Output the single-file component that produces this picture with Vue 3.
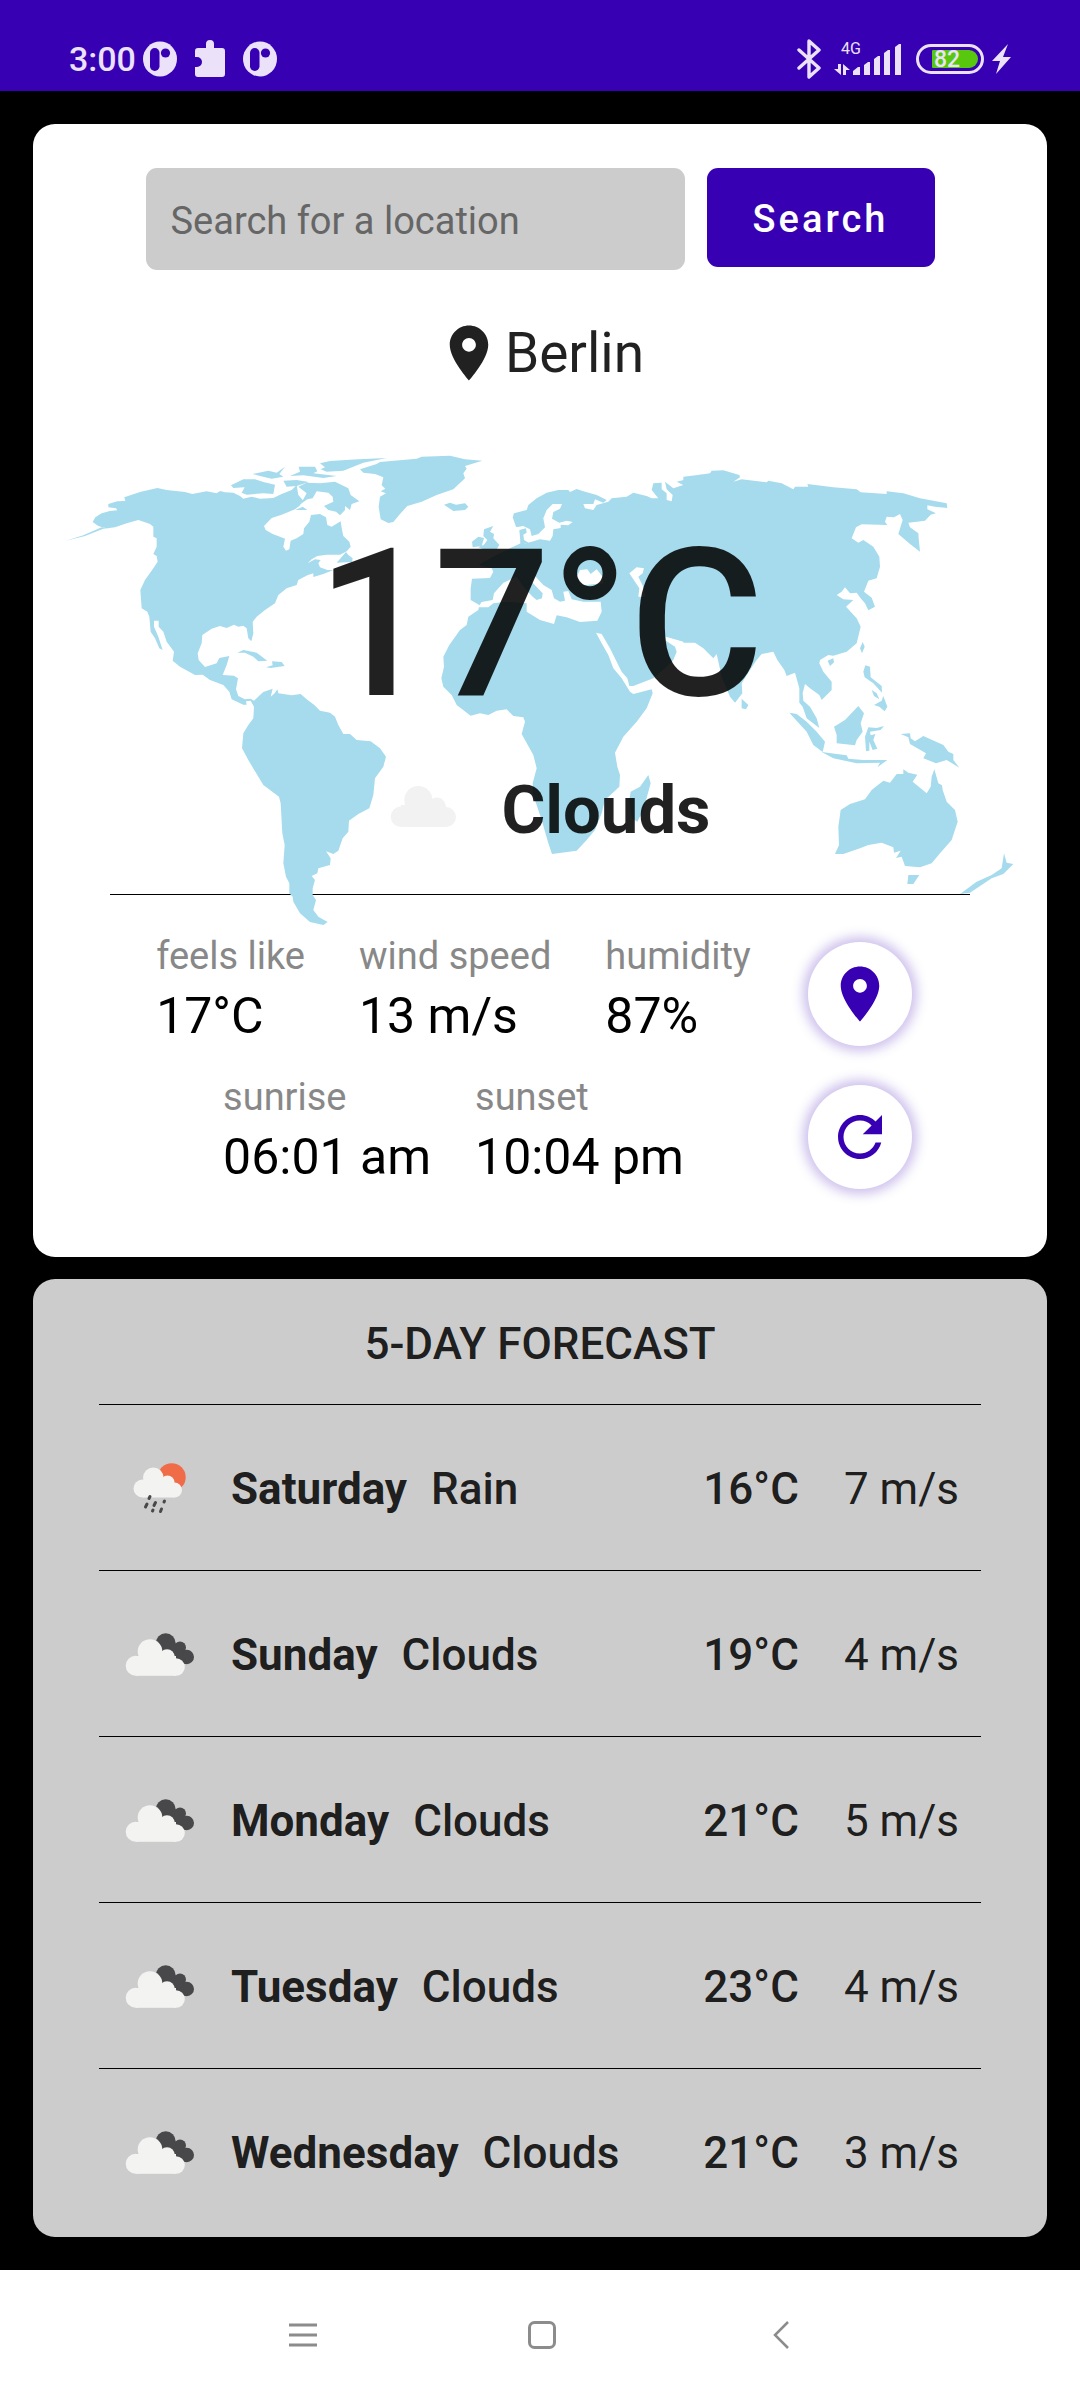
<script setup>
	import { ref } from 'vue'

	const query = ref('');

	const current = {
		city: 'Berlin',
		temp: 17,
		condition: 'Clouds'
	};

	const statRows = [
		[
			{label: 'feels like', value: '17°C'},
			{label: 'wind speed', value: '13 m/s'},
			{label: 'humidity', value: '87%'}
		],
		[
			{label: 'sunrise', value: '06:01 am'},
			{label: 'sunset', value: '10:04 pm'}
		]
	];

	const forecast = [
		{day: 'Saturday', condition: 'Rain', temp: 16, wind: 7},
		{day: 'Sunday', condition: 'Clouds', temp: 19, wind: 4},
		{day: 'Monday', condition: 'Clouds', temp: 21, wind: 5},
		{day: 'Tuesday', condition: 'Clouds', temp: 23, wind: 4},
		{day: 'Wednesday', condition: 'Clouds', temp: 21, wind: 3}
	];
</script>

<template>
	<div class="screen">
		<header class="statusbar">
			<div class="status-left">
				<span class="time">3:00</span>
				<svg width="34" height="36" viewBox="0 0 34 36">
					<ellipse cx="17" cy="18" rx="17" ry="17.500" fill="#ebe2fa" />
					<rect x="7" y="7" width="9.500" height="23" rx="4.700" fill="#3700b3" />
					<circle cx="22.500" cy="12" r="4.600" fill="#3700b3" />
				</svg>
				<svg width="30" height="38" viewBox="0 0 30 38">
					<path fill="#ebe2fa" d="M3 8h8V4a4 4 0 0 1 8 0v4h8a3 3 0 0 1 3 3v23a3 3 0 0 1-3 3H3a3 3 0 0 1-3-3v-7h2a5 5 0 0 0 0-10H0v-6a3 3 0 0 1 3-3z" />
				</svg>
				<svg width="34" height="36" viewBox="0 0 34 36">
					<ellipse cx="17" cy="18" rx="17" ry="17.500" fill="#ebe2fa" />
					<rect x="7" y="7" width="9.500" height="23" rx="4.700" fill="#3700b3" />
					<circle cx="22.500" cy="12" r="4.600" fill="#3700b3" />
				</svg>
			</div>
			<div class="status-right">
				<svg class="bluetooth" width="25" height="40" viewBox="0 0 25 40">
					<path d="M2 11l20 18-10 9V2l10 9L2 29" fill="none" stroke="#ebe2fa" stroke-width="3.400" stroke-linejoin="round" stroke-linecap="round" />
				</svg>
				<svg width="68" height="42" viewBox="0 -4 68 42" fill="#ebe2fa">
					<text x="7" y="12" font-family="Roboto, sans-serif" font-size="16">4G</text>
					<path d="M4 22h3v11L0 27h4zM9 33V22l7 6h-4v5z" />
					<path d="M19 33v-4l5-4h2v8zM30 33V23l4-3h2v13zM40 33V17l4-3h2v19zM50 33V11l4-3h2v25zM61 33V5l4-3h2v31z" />
				</svg>
				<div class="battery"><span>82</span></div>
				<svg class="bolt" width="19" height="30" viewBox="0 0 19 30">
					<path d="M16 0L0 17h8L4 30l15-17h-8z" fill="#ebe2fa" />
				</svg>
			</div>
		</header>

		<main>
			<section class="card current">
				<form class="search" @submit.prevent>
					<input v-model="query" type="text" placeholder="Search for a location" aria-label="Search for a location">
					<button type="submit">Search</button>
				</form>

				<div class="location">
					<svg width="66" height="66" viewBox="0 0 24 24">
						<path fill="#212121" d="M12 2C8.130 2 5 5.130 5 9c0 5.250 7 13 7 13s7-7.750 7-13c0-3.870-3.130-7-7-7zm0 9.500c-1.380 0-2.500-1.120-2.500-2.500s1.120-2.500 2.500-2.500 2.500 1.120 2.500 2.500-1.120 2.500-2.500 2.500z" />
					</svg>
					<h1>{{current.city}}</h1>
				</div>

				<div class="hero">
					<svg class="map" viewBox="108 75 2844 1416" fill="#a5dbed">
						<!-- the Americas -->
						<path d="M108 332L160 316 215 292 240 298 205 288 188 276 196 262 215 250 240 243 262 241 258 235 235 232 235 222 262 214 286 213 283 202 330 186 382 174 410 180 465 186 487 192 530 184 560 190 570 183 585 187 610 188 630 198 640 206 665 200 690 206 730 204 755 192 785 180 800 165 805 195 820 212 808 228 795 238 755 254 725 264 702 288 707 300 728 312 750 320 765 326 760 350 768 362 778 358 782 332 800 325 820 312 822 295 838 275 843 255 870 252 888 262 892 285 905 290 932 274 936 300 940 318 958 335 962 350 950 364 930 374 890 374 862 378 845 388 833 400 855 388 872 390 865 400 870 412 892 420 910 420 880 432 850 441 850 430 832 436 805 450 800 465 770 475 745 495 735 520 705 540 680 560 668 576 670 610 664 634 655 625 650 595 640 587 625 590 612 584 590 594 570 588 545 596 517 615 515 640 503 670 506 690 525 711 560 700 568 684 598 678 590 705 578 735 612 737 624 745 618 778 625 798 645 808 662 806 672 812 690 795 700 786 728 776 722 800 734 790 742 778 745 790 785 796 812 792 830 808 852 824 870 842 900 848 915 860 925 885 940 912 960 912 980 930 1022 934 1050 955 1068 980 1060 1010 1035 1045 1030 1095 1018 1135 985 1152 957 1172 955 1205 938 1225 925 1262 910 1272 888 1264 902 1285 900 1305 865 1315 862 1330 845 1338 855 1350 848 1375 848 1395 858 1410 850 1440 865 1460 893 1476 880 1485 840 1476 810 1450 790 1415 788 1400 778 1390 778 1360 768 1340 760 1300 764 1245 757 1210 752 1120 747 1100 700 1065 680 1032 655 990 636 955 640 910 655 885 670 865 672 830 662 812 648 814 650 824 640 824 605 808 598 785 580 765 540 750 518 734 495 735 450 710 428 692 432 665 410 635 400 605 386 590 386 572 372 572 372 590 385 620 398 660 388 655 375 625 362 605 358 560 352 545 335 535 331 480 345 450 370 415 383 395 380 378 370 372 380 350 380 325 370 320 370 290 360 282 325 270 290 280 255 292 220 296 165 318z" />
						<path d="M920 398L948 366 955 375 968 385 966 396zM622 668L640 660 680 668 712 692 685 694 670 680 645 668zM708 712L728 706 726 694 755 696 764 708 722 714z" />
						<path d="M603 166L640 148 675 148 700 156 735 164 730 192 700 190 650 194 635 188 644 172 610 174zM668 132L715 122 740 128 765 110 748 132 760 140 725 146 690 138zM760 152L800 150 836 156 800 168 770 170zM780 138L810 125 806 110 855 110 862 124 850 130 920 138 880 144 820 136zM870 100L900 93 985 88 1070 84 1000 98 940 122 890 125 872 118 885 112zM805 170L830 158 870 160 915 155 955 175 962 195 988 214 965 222 960 240 945 228 945 240 930 256 918 245 895 240 882 228 910 215 908 200 895 188 860 184 848 205 832 208 812 222 830 190zM796 240L818 230 832 240z" />

						<!-- Greenland, Iceland, Europe and Africa -->
						<g transform="translate(960 0)">
							<path d="M30 118L80 102 90 96 200 86 215 80 300 77 345 88 397 92 345 108 350 116 340 130 345 145 310 178 260 195 215 215 172 228 150 252 130 276 115 279 92 268 86 230 90 200 108 190 92 184 106 176 95 166 100 142 75 132 40 128z" />
							<path d="M282 224L300 218 318 224 345 220 355 230 345 240 310 243 300 236zM385 352L402 344 412 330 400 318 402 298 430 288 420 305 432 312 430 325 448 345 440 358 400 358zM366 335L385 320 402 324 395 348 368 352z" />
							<path d="M488 262L492 250 530 240 535 225 560 205 590 188 625 180 655 180 660 186 680 177 700 184 740 195 770 210 760 218 735 208 730 222 700 222 705 235 730 240 740 225 775 215 785 205 830 200 850 188 890 198 905 205 925 205 905 180 910 160 935 158 935 178 950 190 950 210 965 214 968 195 950 178 945 155 970 175 1000 165 980 155 1010 148 1050 134 1100 134 1100 640 1000 635 948 620 948 632 975 650 980 665 970 690 945 715 910 745 850 768 838 768 832 745 815 725 800 695 780 655 755 612 738 608 755 640 775 675 790 715 815 745 840 785 850 792 905 778 908 790 890 835 860 875 820 920 795 968 802 1010 810 1035 808 1070 765 1110 755 1150 735 1200 710 1230 680 1262 606 1272 595 1240 575 1170 548 1090 548 1060 560 1015 550 975 515 912 525 875 520 862 490 858 470 838 440 842 415 855 390 850 362 857 320 825 305 795 280 770 274 745 282 710 280 680 298 645 330 600 350 585 355 560 385 540 388 525 362 510 362 475 366 446 420 444 430 425 425 415 385 405 400 396 440 375 480 355 512 340 508 300 498 290z" />
							<path d="M895 1035L902 1060 880 1140 862 1175 845 1165 838 1110 842 1085 870 1070z" />
							<!-- inland seas -->
							<g fill="#fff">
								<path d="M384 532L395 516 428 510 432 490 460 458 500 440 520 470 548 500 560 510 576 505 578 490 545 455 555 438 580 465 605 480 612 505 630 515 645 512 640 485 655 483 665 508 700 515 752 515 755 545 742 572 690 576 650 562 620 556 612 582 570 570 530 545 530 520 470 515 430 520 415 532z" />
								<path d="M680 440L690 420 712 418 722 432 740 418 758 440 760 460 700 466zM838 430L860 412 882 415 878 430 865 440 880 470 885 500 865 500 868 475z" />
								<path d="M498 292L520 288 540 298 545 318 565 312 585 292 580 265 590 240 608 222 636 222 630 236 610 246 606 266 628 278 650 272 668 276 655 286 632 284 632 294 610 298 608 318 600 332 570 328 545 335 520 342 510 330z" />
							</g>
							<path d="M508 300L528 295 530 308 520 314 522 330 536 338 512 344z" />
						</g>

						<!-- Asia and Oceania -->
						<g transform="translate(1980 0)">
							<path d="M-20 140L30 134 60 130 65 122 100 121 148 135 150 142 130 155 155 148 230 157 235 152 275 160 310 178 315 170 355 170 352 162 430 172 500 178 512 187 590 192 590 184 640 190 690 205 770 220 772 234 735 230 712 226 712 238 738 250 722 254 705 272 655 278 660 292 685 310 686 325 690 365 660 342 625 312 638 270 630 252 612 262 590 260 585 275 592 285 515 283 498 292 485 325 505 338 520 330 550 350 568 380 570 410 560 445 535 452 530 465 522 485 545 503 555 530 535 541 525 520 512 505 500 488 480 490 465 472 455 485 440 495 460 508 490 510 468 530 500 565 512 590 500 640 470 665 430 677 415 675 390 690 388 700 400 725 425 755 425 780 395 810 388 795 360 775 345 762 338 790 340 812 360 830 380 865 388 894 350 865 338 830 328 818 328 775 315 728 290 738 283 720 262 690 250 665 215 672 200 690 180 720 155 760 157 790 135 818 120 800 95 740 80 672 70 685 40 655 15 638 -20 638z" />
							<path d="M155 806L175 825 168 838 155 835zM510 655L518 636 524 650 516 670zM413 692L430 685 432 697 420 708zM526 706L540 710 542 742 575 768 576 788 550 760 524 742 520 725zM545 780L560 790 568 808 552 798zM552 825L575 812 580 798 592 830 584 844 568 830z" />
							<path d="M298 848L320 852 350 875 380 905 405 935 398 966 370 945 350 905zM395 966L440 972 470 976 475 986 520 990 592 990 562 1012 570 998 500 1000 430 985zM432 890L465 870 505 828 522 850 512 880 518 905 500 930 495 946 440 940 440 915zM528 964L525 920 535 892 560 894 582 888 572 900 540 905 542 916 556 912 550 930 562 956 548 960 538 935 538 962zM632 912L660 910 662 925 675 934 700 918 760 945 775 965 790 972 790 990 808 1013 770 990 738 1000 700 985 708 970 660 942 655 922z" />
							<path d="M640 1018L655 1028 682 1034 668 1055 710 1090 722 1070 725 1040 733 1018 745 1060 756 1066 758 1080 770 1115 795 1140 803 1175 785 1230 750 1270 725 1300 690 1312 645 1308 635 1280 618 1284 632 1262 612 1268 610 1252 575 1238 535 1245 510 1255 460 1272 435 1272 447 1245 445 1190 452 1140 480 1122 525 1108 545 1080 580 1052 600 1058 620 1032 640 1032zM655 1335L688 1335 670 1362 652 1362zM942 1270L950 1298 970 1302 940 1332 905 1345 840 1388 810 1392 860 1355 905 1335 935 1315z" />
						</g>
					</svg>

					<p class="temp">{{current.temp}}°C</p>
					<div class="condition">
						<svg width="110" height="110" viewBox="0 0 110 110" fill="#f2f2f2">
							<circle cx="32" cy="61.700" r="10.300" />
							<circle cx="49.300" cy="45" r="14" />
							<circle cx="68" cy="51" r="8.500" />
							<circle cx="77" cy="62" r="10" />
							<rect x="32" y="50" width="45" height="22" />
						</svg>
						<strong>{{current.condition}}</strong>
					</div>
				</div>

				<div class="details">
					<div class="stats">
						<dl v-for="row in statRows">
							<div v-for="stat in row">
								<dt>{{stat.label}}</dt>
								<dd>{{stat.value}}</dd>
							</div>
						</dl>
					</div>
					<div class="actions">
						<button aria-label="Use my location">
							<svg width="66" height="66" viewBox="0 0 24 24">
								<path fill="#3700b3" d="M12 2C8.130 2 5 5.130 5 9c0 5.250 7 13 7 13s7-7.750 7-13c0-3.870-3.130-7-7-7zm0 9.500c-1.380 0-2.500-1.120-2.500-2.500s1.120-2.500 2.500-2.500 2.500 1.120 2.500 2.500-1.120 2.500-2.500 2.500z" />
							</svg>
						</button>
						<button aria-label="Refresh">
							<svg width="66" height="66" viewBox="0 0 24 24">
								<path fill="#3700b3" d="M17.650 6.350C16.200 4.900 14.210 4 12 4c-4.420 0-7.990 3.580-7.990 8s3.570 8 7.990 8c3.730 0 6.840-2.550 7.730-6h-2.080c-.820 2.330-3.040 4-5.650 4-3.310 0-6-2.690-6-6s2.690-6 6-6c1.660 0 3.140.690 4.220 1.780L13 11h7V4l-2.350 2.350z" />
							</svg>
						</button>
					</div>
				</div>
			</section>

			<section class="card forecast">
				<h2>5-DAY FORECAST</h2>
				<ul>
					<li v-for="item in forecast">
						<svg v-if="item.condition === 'Rain'" width="110" height="110" viewBox="0 0 110 110">
							<circle cx="66.700" cy="44.200" r="14" fill="#f06c48" />
							<g fill="#f3f3f2">
								<circle cx="37.500" cy="55.500" r="9" />
								<circle cx="48.300" cy="44.800" r="10.300" />
								<circle cx="62.500" cy="49.500" r="7" />
								<circle cx="69.500" cy="57" r="7.500" />
								<rect x="37.500" y="50" width="32" height="14.500" />
							</g>
							<path d="M45 63.500l-1 2M42 71l-1.500 3M50.500 69.500l-1.500 3M59.500 68l-.500 1M48 77l-.500 1M56.500 76l-1 2.500" stroke="#48484a" stroke-width="3" stroke-linecap="round" />
						</svg>
						<svg v-else width="110" height="110" viewBox="0 0 110 110">
							<g fill="#48484a">
								<circle cx="60.700" cy="44.200" r="10" />
								<circle cx="75" cy="48.500" r="6" />
								<circle cx="81.800" cy="58" r="7.200" />
								<path d="M60 45h15l7 20H66z" />
							</g>
							<g fill="#f3f3f2">
								<circle cx="30.700" cy="66.800" r="10" />
								<circle cx="45" cy="52.500" r="12.300" />
								<circle cx="62" cy="58" r="7.800" />
								<circle cx="71" cy="68" r="8.800" />
								<rect x="30.700" y="57" width="40.300" height="19.800" />
							</g>
						</svg>
						<strong>{{item.day}}</strong>
						<span class="what">{{item.condition}}</span>
						<span class="degrees">{{item.temp}}°C</span>
						<span>{{item.wind}} m/s</span>
					</li>
				</ul>
			</section>
		</main>

		<nav class="navbar">
			<button aria-label="Recent apps">
				<svg width="28" height="28" viewBox="0 0 28 28" stroke="#8c8c8c" stroke-width="3">
					<path d="M0 4h28M0 14h28M0 24h28" />
				</svg>
			</button>
			<button aria-label="Home">
				<svg width="28" height="28" viewBox="0 0 28 28" stroke="#8c8c8c" stroke-width="3" fill="none">
					<rect x="1.500" y="1.500" width="25" height="25" rx="5" />
				</svg>
			</button>
			<button aria-label="Back">
				<svg width="28" height="28" viewBox="0 0 28 28" stroke="#8c8c8c" stroke-width="2.500" fill="none">
					<path d="M21 1L8 14l13 13" />
				</svg>
			</button>
		</nav>
	</div>
</template>

<style>
	body {
		margin: 0;
		background: #000;
	}
</style>

<style scoped>
	.screen {
		font-family: Roboto, "Noto Sans", sans-serif;
		color: rgba(0,0,0,.87);
		background: #000;
	}
	svg {
		display: block;
		flex: none;
	}
	button {
		padding: 0;
		border: none;
		font-family: inherit;
		cursor: pointer;
	}
	h1, h2, p, dl, dd, ul {
		margin: 0;
		padding: 0;
	}

	.statusbar {
		display: flex;
		justify-content: space-between;
		box-sizing: border-box;
		height: 91px;
		padding: 27px 69px 0;
		background: #3700b3;
		color: #ebe2fa;
	}
	.status-left, .status-right {
		display: flex;
		align-items: center;
	}
	.status-left { gap: 18px; }
	.status-right { gap: 14px; }
	.time {
		margin-right: -11px;
		font-size: 34px;
		font-weight: 500;
	}
	.bluetooth { margin-right: -2px; }
	.battery {
		display: flex;
		box-sizing: border-box;
		width: 68px;
		height: 30px;
		padding: 3px 3px 3px 13px;
		border: 3px solid #ebe2fa;
		border-radius: 15px;
	}
	.battery span {
		flex: 1;
		padding-left: 2px;
		border-radius: 1px 9px 9px 1px;
		background: #58c80e;
		font-size: 23px;
		font-weight: 500;
		line-height: 20px;
	}
	.bolt { margin-left: -6px; }

	main {
		display: flex;
		flex-direction: column;
		gap: 22px;
		padding: 33px;
	}
	.card {
		border-radius: 22px;
		background: #fff;
	}
	.current { padding: 44px 0 68px; }

	.search {
		display: flex;
		justify-content: center;
		align-items: flex-start;
		gap: 22px;
	}
	.search input {
		box-sizing: border-box;
		width: 539px;
		height: 102px;
		padding: 3px 25px 0;
		border: none;
		border-radius: 11px;
		background: #ccc;
		font-family: inherit;
		font-size: 38px;
	}
	.search input::placeholder {
		color: #666;
		opacity: 1;
	}
	.search button {
		width: 228px;
		height: 99px;
		padding-top: 3px;
		border-radius: 11px;
		background: #3700b3;
		color: #fff;
		font-size: 38px;
		font-weight: 500;
		letter-spacing: 3px;
	}

	.location {
		display: flex;
		justify-content: center;
		align-items: center;
		gap: 3px;
		margin-top: 50px;
	}
	.location h1 {
		font-size: 55px;
		font-weight: 400;
	}

	.hero {
		position: relative;
		margin: 0 77px;
		padding: 119px 0 29px;
		border-bottom: 1px solid #000;
		text-align: center;
	}
	/* the map lies behind the temperature and runs past the divider */
	.map {
		position: absolute;
		top: 69px;
		left: -44px;
		width: calc(100% + 88px);
	}
	.temp {
		position: relative;
		font-size: 206px;
		font-weight: 500;
		line-height: 240px;
	}
	.condition {
		position: relative;
		display: flex;
		justify-content: center;
		align-items: center;
		gap: 22px;
		margin-top: 10px;
	}
	.condition strong { font-size: 67px; }

	.details {
		display: flex;
		justify-content: center;
		gap: 57px;
		padding: 38px 12px 0 0;
	}
	.stats {
		display: flex;
		flex-direction: column;
		gap: 29px;
	}
	.stats dl {
		display: flex;
		justify-content: center;
		gap: 54px;
	}
	.stats dl + dl { gap: 44px; }
	.stats dt {
		margin-bottom: 8px;
		color: #888;
		font-size: 38px;
		line-height: 46px;
	}
	.stats dd {
		color: #000;
		font-size: 50px;
		line-height: 58px;
	}
	.actions {
		display: flex;
		flex-direction: column;
		gap: 39px;
		padding-top: 9px;
	}
	.actions button {
		display: grid;
		place-items: center;
		width: 104px;
		height: 104px;
		border-radius: 50%;
		background: #fff;
		box-shadow: 0 0 12px 5px rgba(55,0,179,.25);
	}

	.forecast {
		padding: 39px 66px 3px;
		background: #ccc;
	}
	.forecast h2 {
		margin-bottom: 34px;
		font-size: 44px;
		font-weight: 500;
		line-height: 52px;
		text-align: center;
	}
	.forecast li {
		display: flex;
		align-items: center;
		height: 165px;
		padding: 0 22px 0 6px;
		border-top: 1px solid #000;
		font-size: 44px;
	}
	.forecast li strong, .forecast li span { padding-top: 3px; }
	.forecast strong { margin: 0 24px 0 16px; }
	.what {
		flex: 1;
		font-weight: 500;
	}
	.degrees {
		margin-right: 45px;
		font-weight: 500;
	}

	.navbar {
		display: flex;
		justify-content: center;
		gap: 211px;
		height: 130px;
		padding-left: 3px;
		background: #fff;
	}
	.navbar button {
		display: grid;
		place-items: center;
		background: none;
	}
</style>
